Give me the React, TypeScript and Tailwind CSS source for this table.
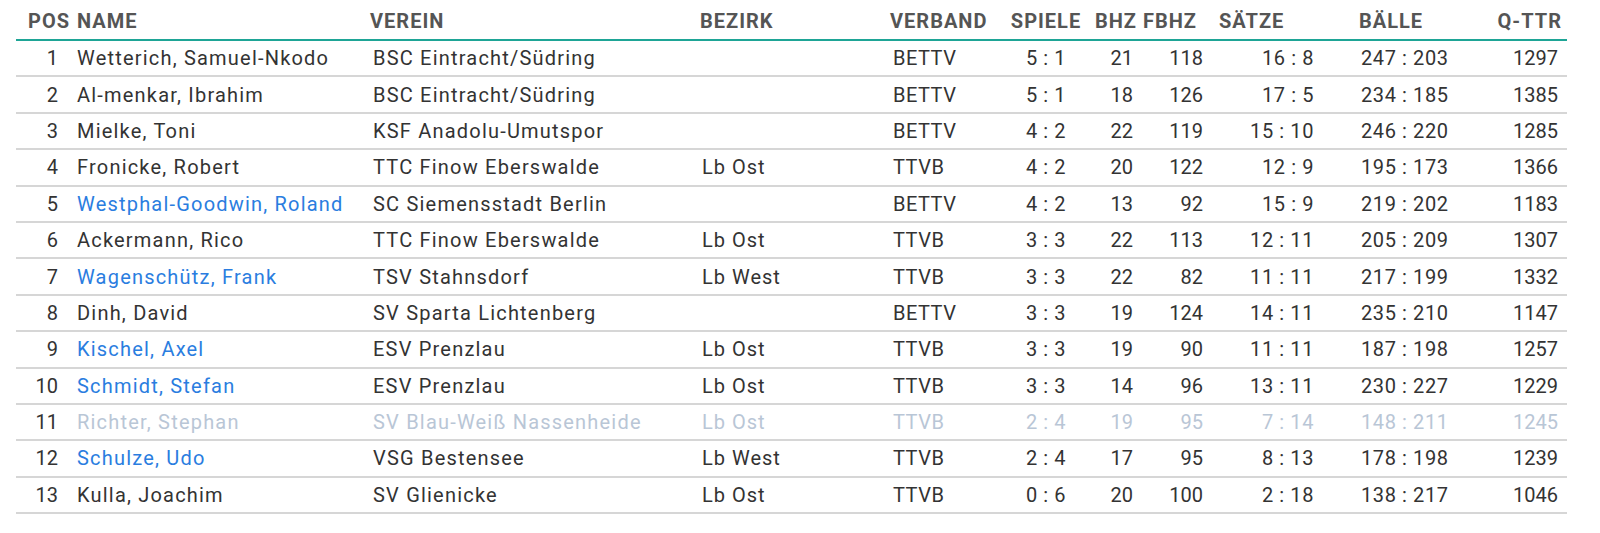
type Row = {
  pos: number;
  name: string;
  verein: string;
  bezirk: string;
  verband: string;
  spiele: string;
  bhz: number;
  fbhz: number;
  saetze: string;
  baelle: string;
  qttr: number;
  link?: boolean;
  faded?: boolean;
};

const ROWS: Row[] = [
  { pos: 1, name: 'Wetterich, Samuel-Nkodo', verein: 'BSC Eintracht/Südring', bezirk: '', verband: 'BETTV', spiele: '5 : 1', bhz: 21, fbhz: 118, saetze: '16 : 8', baelle: '247 : 203', qttr: 1297 },
  { pos: 2, name: 'Al-menkar, Ibrahim', verein: 'BSC Eintracht/Südring', bezirk: '', verband: 'BETTV', spiele: '5 : 1', bhz: 18, fbhz: 126, saetze: '17 : 5', baelle: '234 : 185', qttr: 1385 },
  { pos: 3, name: 'Mielke, Toni', verein: 'KSF Anadolu-Umutspor', bezirk: '', verband: 'BETTV', spiele: '4 : 2', bhz: 22, fbhz: 119, saetze: '15 : 10', baelle: '246 : 220', qttr: 1285 },
  { pos: 4, name: 'Fronicke, Robert', verein: 'TTC Finow Eberswalde', bezirk: 'Lb Ost', verband: 'TTVB', spiele: '4 : 2', bhz: 20, fbhz: 122, saetze: '12 : 9', baelle: '195 : 173', qttr: 1366 },
  { pos: 5, name: 'Westphal-Goodwin, Roland', verein: 'SC Siemensstadt Berlin', bezirk: '', verband: 'BETTV', spiele: '4 : 2', bhz: 13, fbhz: 92, saetze: '15 : 9', baelle: '219 : 202', qttr: 1183, link: true },
  { pos: 6, name: 'Ackermann, Rico', verein: 'TTC Finow Eberswalde', bezirk: 'Lb Ost', verband: 'TTVB', spiele: '3 : 3', bhz: 22, fbhz: 113, saetze: '12 : 11', baelle: '205 : 209', qttr: 1307 },
  { pos: 7, name: 'Wagenschütz, Frank', verein: 'TSV Stahnsdorf', bezirk: 'Lb West', verband: 'TTVB', spiele: '3 : 3', bhz: 22, fbhz: 82, saetze: '11 : 11', baelle: '217 : 199', qttr: 1332, link: true },
  { pos: 8, name: 'Dinh, David', verein: 'SV Sparta Lichtenberg', bezirk: '', verband: 'BETTV', spiele: '3 : 3', bhz: 19, fbhz: 124, saetze: '14 : 11', baelle: '235 : 210', qttr: 1147 },
  { pos: 9, name: 'Kischel, Axel', verein: 'ESV Prenzlau', bezirk: 'Lb Ost', verband: 'TTVB', spiele: '3 : 3', bhz: 19, fbhz: 90, saetze: '11 : 11', baelle: '187 : 198', qttr: 1257, link: true },
  { pos: 10, name: 'Schmidt, Stefan', verein: 'ESV Prenzlau', bezirk: 'Lb Ost', verband: 'TTVB', spiele: '3 : 3', bhz: 14, fbhz: 96, saetze: '13 : 11', baelle: '230 : 227', qttr: 1229, link: true },
  { pos: 11, name: 'Richter, Stephan', verein: 'SV Blau-Weiß Nassenheide', bezirk: 'Lb Ost', verband: 'TTVB', spiele: '2 : 4', bhz: 19, fbhz: 95, saetze: '7 : 14', baelle: '148 : 211', qttr: 1245, faded: true },
  { pos: 12, name: 'Schulze, Udo', verein: 'VSG Bestensee', bezirk: 'Lb West', verband: 'TTVB', spiele: '2 : 4', bhz: 17, fbhz: 95, saetze: '8 : 13', baelle: '178 : 198', qttr: 1239, link: true },
  { pos: 13, name: 'Kulla, Joachim', verein: 'SV Glienicke', bezirk: 'Lb Ost', verband: 'TTVB', spiele: '0 : 6', bhz: 20, fbhz: 100, saetze: '2 : 18', baelle: '138 : 217', qttr: 1046 },
];

export default function App() {
  return (
    <div className="w-[1600px] h-[533px] bg-white pl-4 text-[#333333] font-['Roboto',_'Liberation_Sans',_sans-serif]">
      <table className="table-fixed w-[1551px] border-collapse text-[20px]">
        <colgroup>
          <col className="w-[60px]" />
          <col className="w-[294px]" />
          <col className="w-[330px]" />
          <col className="w-[190px]" />
          <col className="w-[110px]" />
          <col className="w-[92px]" />
          <col className="w-[45px]" />
          <col className="w-[70px]" />
          <col className="w-[113px]" />
          <col className="w-[150px]" />
          <col className="w-[97px]" />
        </colgroup>
        <thead>
          <tr className="h-[40px] border-b-2 border-[#1ea596] text-[20px] font-bold text-[#555555] leading-none tracking-[1px]">
            <th className="text-right pr-[6px] pt-[3px] font-bold">POS</th>
            <th className="text-left pl-[1px] pt-[3px] font-bold">NAME</th>
            <th className="text-left pt-[3px] font-bold">VEREIN</th>
            <th className="text-left pt-[3px] font-bold">BEZIRK</th>
            <th className="text-left pt-[3px] font-bold">VERBAND</th>
            <th className="text-center pt-[3px] font-bold">SPIELE</th>
            <th className="text-right pr-0 pt-[3px] font-bold">BHZ</th>
            <th className="text-right pr-[10px] pt-[3px] font-bold">FBHZ</th>
            <th className="text-left pl-[12px] pt-[3px] font-bold">SÄTZE</th>
            <th className="text-left pl-[39px] pt-[3px] font-bold">BÄLLE</th>
            <th className="text-right pr-[5px] pt-[3px] font-bold">Q-TTR</th>
          </tr>
        </thead>
        <tbody>
          {ROWS.map((r) => {
            const cell = r.faded ? 'text-[#b9c6d6]' : '';
            return (
              <tr key={r.pos} className="h-[36.4px] border-b-2 border-[#d6d6d6] leading-none">
                <td className="text-right pr-[18px]">{r.pos}</td>
                <td
                  className={`pl-[1px] tracking-[1.2px] ${
                    r.faded ? 'text-[#b9c6d6]' : r.link ? 'text-[#2a7de0]' : ''
                  }`}
                >
                  {r.name}
                </td>
                <td className={`pl-[3px] tracking-[1.2px] ${cell}`}>{r.verein}</td>
                <td className={`pl-[2px] tracking-[1px] ${cell}`}>{r.bezirk}</td>
                <td className={`pl-[3px] tracking-[0.5px] ${cell}`}>{r.verband}</td>
                <td className={`text-center tracking-[0.6px] ${cell}`}>{r.spiele}</td>
                <td className={`text-right pr-[4px] ${cell}`}>{r.bhz}</td>
                <td className={`text-right pr-[4px] ${cell}`}>{r.fbhz}</td>
                <td className={`text-right pr-[6px] tracking-[0.6px] ${cell}`}>{r.saetze}</td>
                <td className={`text-left pl-[41px] tracking-[0.6px] ${cell}`}>{r.baelle}</td>
                <td className={`text-right pr-[9px] ${cell}`}>{r.qttr}</td>
              </tr>
            );
          })}
        </tbody>
      </table>
    </div>
  );
}
